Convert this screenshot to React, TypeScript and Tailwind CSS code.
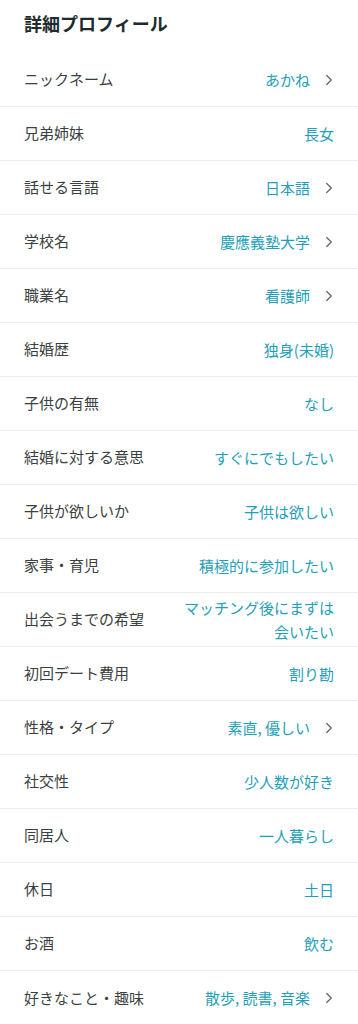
import { ChevronRight } from "lucide-react";

const rows: { label: string; value: string[]; link?: boolean }[] = [
  { label: "ニックネーム", value: ["あかね"], link: true },
  { label: "兄弟姉妹", value: ["長女"] },
  { label: "話せる言語", value: ["日本語"], link: true },
  { label: "学校名", value: ["慶應義塾大学"], link: true },
  { label: "職業名", value: ["看護師"], link: true },
  { label: "結婚歴", value: ["独身(未婚)"] },
  { label: "子供の有無", value: ["なし"] },
  { label: "結婚に対する意思", value: ["すぐにでもしたい"] },
  { label: "子供が欲しいか", value: ["子供は欲しい"] },
  { label: "家事・育児", value: ["積極的に参加したい"] },
  { label: "出会うまでの希望", value: ["マッチング後にまずは", "会いたい"] },
  { label: "初回デート費用", value: ["割り勘"] },
  { label: "性格・タイプ", value: ["素直, 優しい"], link: true },
  { label: "社交性", value: ["少人数が好き"] },
  { label: "同居人", value: ["一人暮らし"] },
  { label: "休日", value: ["土日"] },
  { label: "お酒", value: ["飲む"] },
  { label: "好きなこと・趣味", value: ["散歩, 読書, 音楽"], link: true },
];

export default function App() {
  return (
    <div
      className="w-[358px] bg-white"
      style={{ fontFamily: '"Noto Sans CJK JP", "Noto Sans", sans-serif' }}
    >
      <h2 className="px-6 h-[53px] pt-[10px] text-[18px] font-bold text-[#1e2b2e] leading-[26px]">
        詳細プロフィール
      </h2>
      <div>
        {rows.map((row, i) => (
          <div
            key={row.label}
            className={`h-[54px] px-6 flex items-center justify-between ${
              i < rows.length - 1 ? "border-b border-[#ececec]" : ""
            }`}
          >
            <span className="text-[15px] text-[#3a3f41] whitespace-nowrap">{row.label}</span>
            <div className="flex items-center">
              <div className="text-right text-[15px] leading-[24px] text-[#1fa0b8]">
                {row.value.map((v) => (
                  <div key={v}>{v}</div>
                ))}
              </div>
              {row.link && (
                <ChevronRight className="w-[18px] h-[18px] ml-[10px] -mr-[4px] text-[#5f696d]" strokeWidth={1.75} />
              )}
            </div>
          </div>
        ))}
      </div>
    </div>
  );
}
